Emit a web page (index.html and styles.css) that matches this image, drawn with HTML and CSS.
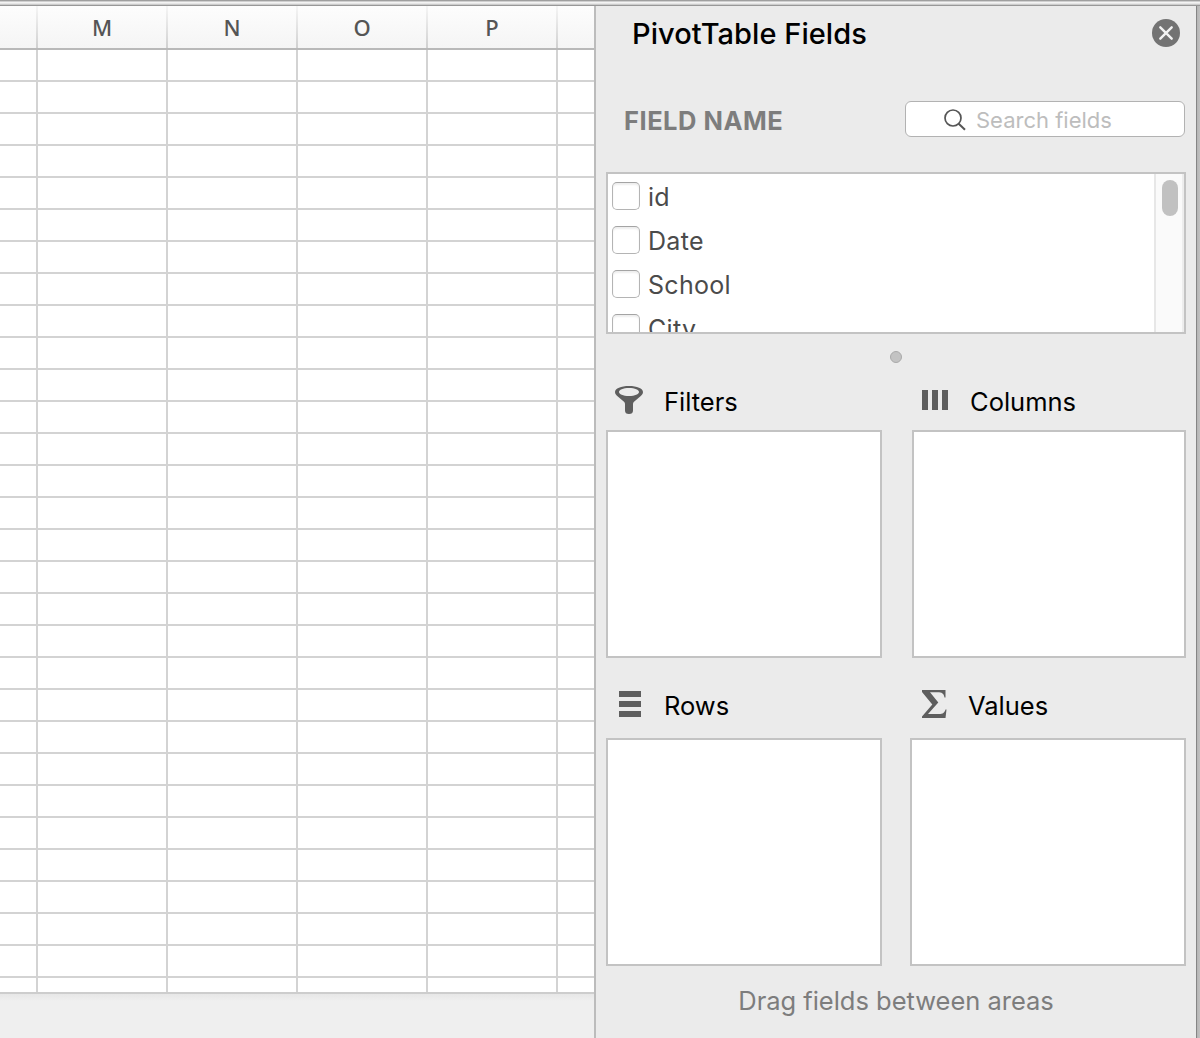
FILE: index.html
```html
<!DOCTYPE html>
<html lang="en">
<head>
<meta charset="utf-8">
<title>PivotTable Fields</title>
<link rel="stylesheet" href="styles.css">
</head>
<body>
<div class="window">
  <div class="toolbar-edge"></div>
  <div class="workspace">
    <main class="sheet">
      <div class="column-heads">
        <span class="head"></span><span class="head">M</span><span class="head">N</span><span class="head">O</span><span class="head">P</span><span class="head"></span>
      </div>
      <div class="cells"></div>
      <div class="sheet-footer"></div>
    </main>
    <aside class="panel">
      <header class="panel-header">
        <h1 class="title">PivotTable Fields</h1>
        <svg class="close" viewBox="0 0 28 28"><circle cx="14" cy="14" r="14" fill="#737373"/><path d="M8.3 8.3l11.4 11.4M19.7 8.3L8.3 19.7" stroke="#f2f2f2" stroke-width="2.4" stroke-linecap="round"/></svg>
      </header>
      <div class="search-row">
        <h2 class="field-name">FIELD NAME</h2>
        <div class="search">
          <svg class="search-icon" viewBox="0 0 22 22"><circle cx="9" cy="9" r="8" fill="none" stroke="#555" stroke-width="1.7"/><path d="M14.7 14.7l6.3 6.1" stroke="#555" stroke-width="2"/></svg>
          <span class="placeholder">Search fields</span>
        </div>
      </div>
      <div class="field-list">
        <div class="fields">
          <div class="field"><span class="checkbox"></span><span class="label">id</span></div>
          <div class="field"><span class="checkbox"></span><span class="label">Date</span></div>
          <div class="field"><span class="checkbox"></span><span class="label">School</span></div>
          <div class="field"><span class="checkbox"></span><span class="label">City</span></div>
        </div>
        <div class="scrollbar"><div class="thumb"></div></div>
      </div>
      <div class="splitter"><span class="dot"></span></div>
      <div class="areas">
        <section class="area">
          <h3 class="area-head"><svg class="area-icon" viewBox="0 0 32 32"><path fill="#5e5e5e" fill-rule="evenodd" d="M16 2C24 2 30 4.500 30 8C30 9.800 29 11 27.500 12.300L21 17.800Q20 18.700 20 20V26.500Q20 30 16 30Q12 30 12 26.500V20Q12 18.700 11 17.800L4.500 12.300C3 11 2 9.800 2 8C2 4.500 8 2 16 2ZM16 4C10 4 6 5.700 6 8C6 10.300 10 12 16 12S26 10.300 26 8C26 5.700 22 4 16 4Z"/></svg><span class="area-label">Filters</span></h3>
          <div class="drop"></div>
        </section>
        <section class="area narrow">
          <h3 class="area-head"><svg class="area-icon" viewBox="0 0 32 32"><path fill="#5e5e5e" d="M3 6h6v20H3zM13 6h6v20h-6zM23 6h6v20h-6z"/></svg><span class="area-label">Columns</span></h3>
          <div class="drop"></div>
        </section>
        <section class="area">
          <h3 class="area-head"><svg class="area-icon" viewBox="0 0 32 32"><path fill="#5e5e5e" d="M6 3h22v6H6zM6 13h22v6H6zM6 23h22v6H6z"/></svg><span class="area-label">Rows</span></h3>
          <div class="drop"></div>
        </section>
        <section class="area">
          <h3 class="area-head"><svg class="area-icon" viewBox="0 0 32 32"><path fill="#5e5e5e" d="M5 2H28.500V9.500H27.500C26.800 5.500 25 4.200 20.500 4.200H13L21.300 14.500L11 26H22C26 26 27.500 24.800 28.500 21.500H29.500L28.500 30H5V28.500L15.300 16.500L5 4Z"/></svg><span class="area-label">Values</span></h3>
          <div class="drop"></div>
        </section>
      </div>
      <p class="hint">Drag fields between areas</p>
    </aside>
    <div class="window-edge"></div>
  </div>
</div>
</body>
</html>
```
FILE: styles.css
```css
* { box-sizing: border-box; }
body { margin: 0; font-family: Inter, "Liberation Sans", sans-serif; }
h1, h2, h3, p { margin: 0; font-weight: 400; white-space: nowrap; }
svg { display: block; flex: none; }
.window { width: 1200px; height: 1038px; display: flex; flex-direction: column; overflow: hidden; background: #ebebeb; }
.toolbar-edge { height: 6px; flex: none; background: linear-gradient(#9f9f9f 0 1px, #cfcfcf 1px 2px, #f3f3f3 2px 3px, #e6e6e6 3px 4px, #cbcbcb 4px 5px, #989898 5px); }
.workspace { flex: 1; display: flex; }

.sheet { width: 594px; display: flex; flex-direction: column; background: #efefef; }
.column-heads { height: 44px; display: grid; grid-template-columns: 38px repeat(4, 130px) 36px; background: linear-gradient(#fdfdfd, #f5f5f5); border-bottom: 2px solid #b9b9b9; }
.head { display: flex; justify-content: center; padding-top: 5px; font: 500 22px/32px "Noto Sans", sans-serif; color: #555; border-right: 2px solid; border-image: linear-gradient(#f6f6f6, #d0d0d0) 1; }
.head:last-child { border: 0; }
.cells {
  height: 944px;
  background-color: #fff;
  background-image: linear-gradient(90deg, #d3d3d3 2px, transparent 2px), linear-gradient(#d3d3d3 2px, transparent 2px);
  background-size: 130px 32px;
  background-position: 36px 30px;
  border-bottom: 2px solid #cdcdcd;
}
.sheet-footer { flex: 1; background: linear-gradient(#e7e7e7, #efefef 7px); }

.panel { width: 602px; border-left: 2px solid #bcbcbc; padding: 0 10px; background: #ebebeb; display: flex; flex-direction: column; }
.panel-header { height: 95px; padding: 13px 6px 0 26px; display: flex; justify-content: space-between; }
.title { font-size: 29px; line-height: 30px; font-weight: 500; letter-spacing: 0.05px; color: #000; }
.close { width: 28px; height: 28px; }
.search-row { height: 71px; padding: 0 1px 0 18px; display: flex; justify-content: space-between; align-items: flex-start; }
.field-name { font-size: 25.500px; line-height: 39px; font-weight: 700; letter-spacing: 0.5px; color: #7d7d7d; }
.search { width: 280px; height: 36px; border: 1px solid #b2b2b2; border-radius: 6px; background: #fff; padding-left: 38px; display: flex; align-items: center; gap: 10px; }
.search-icon { width: 22px; height: 22px; margin-top: 2px; }
.placeholder { font-size: 22px; line-height: 34px; padding-top: 2px; color: #bdbdbd; white-space: nowrap; }

.field-list { height: 162px; border: 2px solid #c3c3c3; background: #fff; display: flex; justify-content: space-between; overflow: hidden; }
.fields { padding: 8px 0 0 4px; }
.field { height: 44px; display: flex; align-items: flex-start; gap: 8px; }
.checkbox { width: 28px; height: 28px; border: 1px solid #b4b4b4; border-top-color: #a4a4a4; border-radius: 5px; background: #fff; box-shadow: inset 0 2px 2px #eee; }
.label { font-size: 25px; line-height: 30px; letter-spacing: 0.3px; color: #4b4b4b; }
.scrollbar { width: 30px; border-left: 2px solid #e7e7e7; border-right: 2px solid #ededed; background: #fafafa; padding: 6px 0 0 6px; }
.thumb { width: 16px; height: 36px; border-radius: 8px; background: #c1c1c1; }
.splitter { height: 50px; display: flex; justify-content: center; padding-top: 17px; }
.dot { width: 12px; height: 12px; border-radius: 50%; background: #c3c3c3; border: 1px solid #aaa; }

.areas { display: grid; grid-template-columns: 276px 276px; justify-content: space-between; row-gap: 30px; }
.area-head { height: 46px; display: flex; align-items: flex-start; padding-left: 7px; }
.area:nth-child(n+3) .area-head { height: 50px; }
.area-icon { width: 32px; height: 32px; }
.narrow { padding-left: 2px; }
.area-label { font-size: 25.500px; line-height: 36px; margin-left: 19px; color: #000; }
.drop { height: 228px; border: 2px solid #c3c3c3; background: #fff; }
.hint { margin-top: 19px; text-align: center; font-size: 25.500px; line-height: 32px; letter-spacing: -0.02px; color: #7d7d7d; }
.window-edge { width: 4px; background: linear-gradient(90deg, #858585 1px, #b5b5b5 1px, #c0c0c0); }
```
